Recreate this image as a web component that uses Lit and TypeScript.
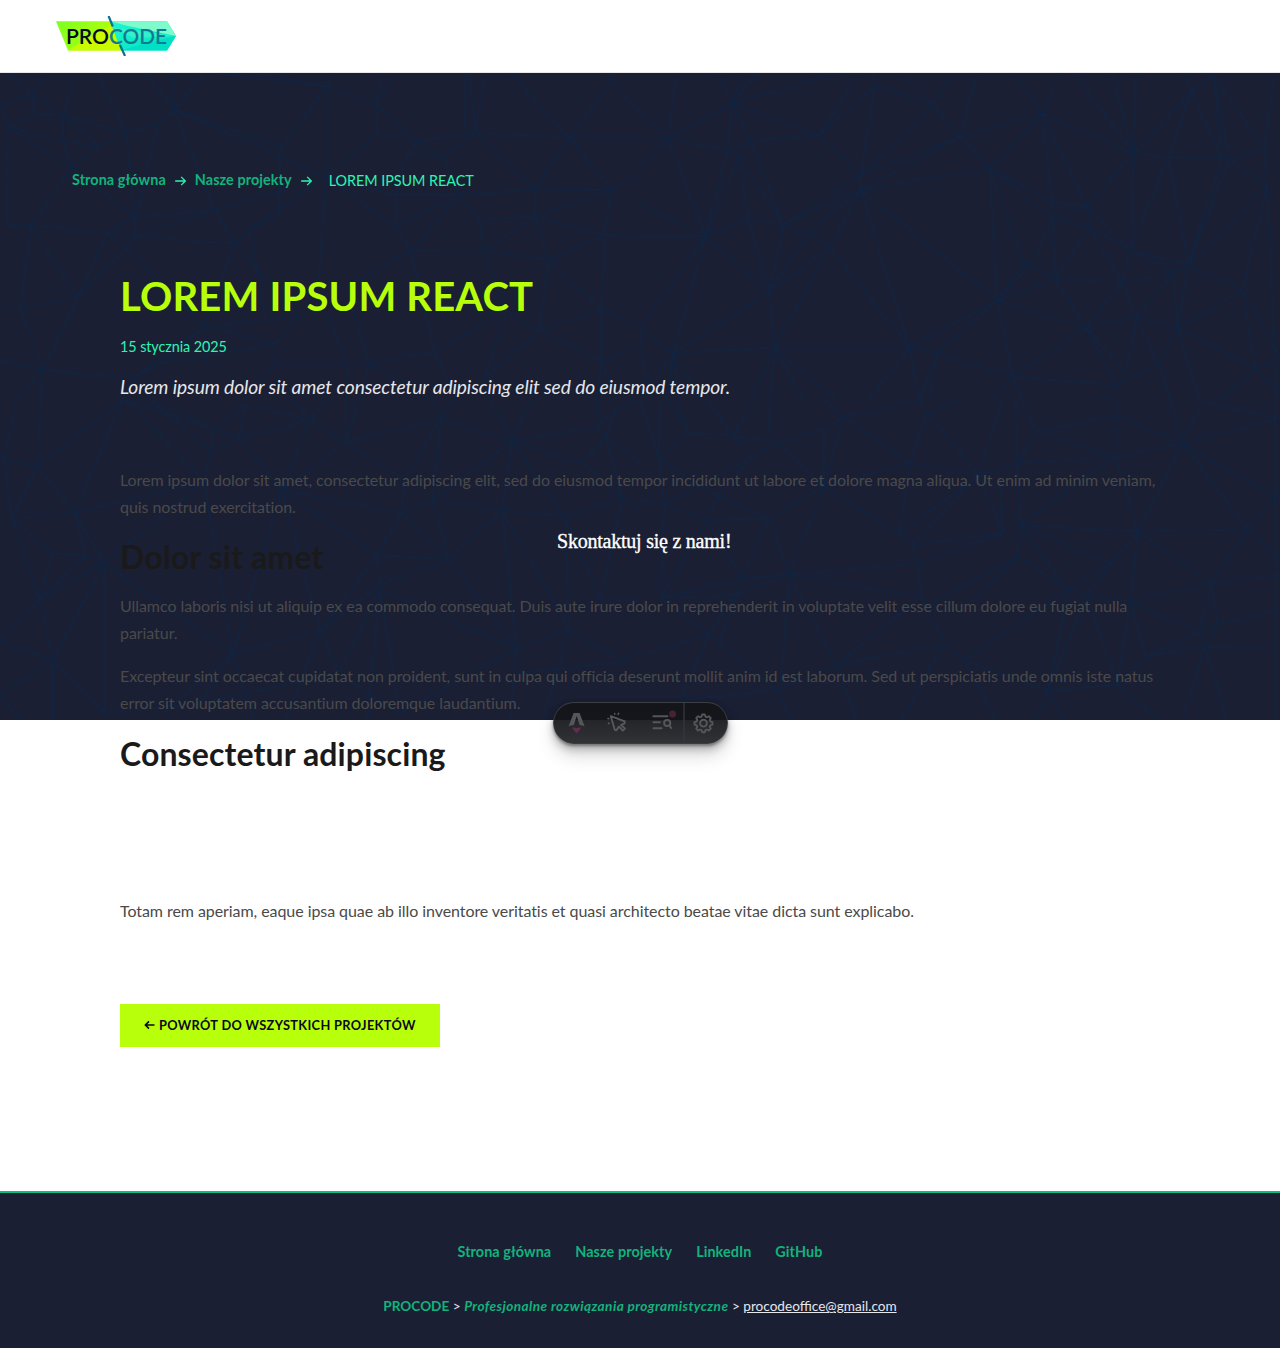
import { LitElement, html, svg, css } from "lit";
import { customElement } from "lit/decorators.js";

// Each tile covers 640x330 units of the mesh, drawn on a finer 1568x990 grid.
// Polylines are separated by ";", points by spaces.
const MESH_TILES: { x: number; y: number; lines: string }[] = [
  {
    x: 0,
    y: 70,
    lines:
      "0,100 80,75 155,135 85,135 80,75 25,10;80,75 105,10;0,100 20,170 85,135;20,170 155,215 240,228 155,135 155,215;20,170 18,465 75,467;155,135 185,10;155,135 310,188;240,228 310,188 385,165 425,118;240,10 310,188;425,10 425,118;355,10 425,118;500,10 425,118;425,118 690,230 685,255;425,118 800,320;425,118 525,420;385,165 335,440;310,188 330,440;240,228 175,295 75,467;175,295 155,215;175,295 330,440;20,170 175,295;75,467 265,488 330,500 330,440 525,420 330,500 575,520 525,420;265,488 330,440;330,500 310,535 265,488 190,680;310,535 500,770;310,535 190,680;575,520 610,478 685,435 685,255;610,478 800,320;525,420 700,360;800,50 690,230;800,50 640,10;800,50 800,320;800,50 920,100;800,50 815,10;530,10 800,50;920,100 935,10;920,100 925,190 1025,215 1165,185;925,190 800,320;920,100 1025,215 1000,250 1085,262 1165,187;1025,215 1085,262;1140,10 1140,180;1150,10 1165,187;1190,10 1165,187;970,10 920,100;1165,187 1395,203 1568,203;1250,10 1395,203 1500,30 1568,130;1500,30 1490,10;1395,203 1310,358 1165,187;1395,203 1500,360;1085,262 1125,375 970,375 800,320;1125,375 1310,358 1500,360 1568,310;1000,250 970,375 968,470 800,320;1125,375 968,470 1005,543 1125,375 1175,448 1310,440 1310,358;1175,448 1185,540 1005,543;1185,540 1310,440 1480,495 1500,360;1480,495 1568,497;1480,495 1345,570 1310,440;1185,540 1345,570;1310,440 1500,360;1345,570 1320,780;1480,495 1475,720 1320,780 1240,720 1185,540;1475,720 1568,765;1345,570 1475,720 1475,875 1568,830;1320,780 1475,875;1320,780 1185,930 1240,720 1065,845 905,880 675,880;1065,845 1120,990;1005,543 860,640;1005,543 1065,845;800,320 780,640;500,770 675,820 730,740 500,770;675,820 675,880;675,820 395,880;500,770 505,880;190,680 50,715 105,900 190,680;75,467 50,715 0,715;75,467 190,680;0,870 105,900 325,925 395,880 500,770 325,925;850,880 800,730;905,880 860,700;575,520 500,770;610,478 650,740;575,520 730,740;105,900 100,990;105,900 40,990;325,925 300,990;325,925 370,990;675,880 600,990;850,880 848,990;905,880 880,990;905,880 1060,990;1185,930 1200,990;1475,875 1460,990;1475,875 1510,990",
  },
  {
    x: 640,
    y: 70,
    lines:
      "0,120 68,205 90,10;0,205 68,205 225,100;68,205 0,290;68,205 215,240 225,100;68,205 160,498;225,100 250,10;225,100 190,10;225,100 290,10;225,100 480,10;225,100 440,195;225,100 272,212 440,195 540,315;272,212 215,240 242,262 272,212;440,195 535,10;440,195 577,45 570,10;577,45 718,105 640,10;718,105 765,10;718,105 785,200 825,10;577,45 540,315;718,105 540,315 785,200 985,130;785,200 857,295;785,200 540,360;540,315 540,360 857,295;540,315 350,465 540,360;540,360 410,490;540,360 465,530;540,360 660,832;540,360 875,692;985,130 920,10;985,130 1030,10;985,130 1210,252;985,130 857,295;985,130 1010,400;985,130 1095,408;1065,10 1210,252;1155,10 1210,252;1215,10 1210,252 1350,65 1405,15;1335,10 1350,65 1425,265;1350,65 1295,260;1210,252 1295,260 1445,268;1405,15 1425,265;1405,15 1445,268;1405,15 1530,235 1445,268 1537,348;1555,10 1530,235 1537,348;1210,252 1095,408;1210,252 1200,540 1295,260 1343,585 1425,265;1445,268 1343,585 1537,348 1475,660;1537,348 1560,990;857,295 1010,395 1095,408 1100,470 1010,445 857,295;1010,445 1095,408 1200,540 1100,470;1010,400 1018,625;1010,445 965,570 940,580;965,570 875,692;857,295 940,580;857,295 875,692;940,580 1018,625 1180,638;940,580 875,692;1018,625 1100,470 1180,638 1200,540;1180,638 1305,608 1200,540 1343,585 1305,608;1343,585 1475,660;1305,608 1318,775 1343,585;1305,608 1217,740 1180,638 1092,773;1018,625 1092,773 1217,740 1318,775 1475,660;1018,625 875,692 1092,773;660,832 875,692 728,848;875,692 913,920 1092,773 1170,945;1092,773 1190,910 1217,740 1270,882;1318,775 1270,882 1170,945 913,920 728,848 660,832 330,832 82,850;1318,775 1508,895 1475,660;1508,895 1568,870;1475,660 1568,860;160,498 0,400;0,498 160,498 215,240;242,262 160,498 265,445 350,465 410,490 465,530;242,262 265,445 318,665;242,262 350,465 272,212;350,465 318,665 160,498;410,490 318,665 465,530 330,832 318,665 82,850 160,498 0,775 82,850;465,530 660,832;0,775 15,940;82,850 20,940;82,850 65,990;82,850 95,990;82,850 150,990;330,832 270,990;330,832 320,990;330,832 400,990;330,832 480,990;660,832 560,990;660,832 685,990 728,848 710,990;913,920 860,990;913,920 935,990;1170,945 1130,990;1270,882 1300,990;1318,775 1370,990;1508,895 1420,990;1508,895 1568,970",
  },
  {
    x: 0,
    y: 400,
    lines:
      "0,165 10,175 90,200 100,0;40,0 10,175;90,200 300,0;90,200 28,355 10,175;90,200 183,338 28,355;183,338 300,0;183,338 500,245;183,338 210,468 130,460 28,355;183,338 255,490 210,468 95,600;255,490 95,600 130,460;28,355 95,600 0,725 130,780 95,600;255,490 130,780;255,490 500,245;255,490 255,940;255,490 570,760;130,780 0,885 50,960;130,780 130,960;130,780 255,940;300,0 525,85 370,0 515,155;310,0 500,245;525,85 600,12 585,115 525,85 515,155 585,115 760,60 600,12;515,155 500,245;585,115 690,270 760,60;720,0 760,60 800,0;760,60 848,125;848,0 848,125 880,0;690,270 848,125 1080,55;848,125 990,240 1080,55;1060,0 1080,55 1110,0;1080,55 1255,125;1080,55 1060,298 1255,125;1200,0 1255,125 1300,0;1255,125 1460,80;1255,125 1425,187 1485,110 1460,80 1510,30 1568,0;1460,80 1465,0;1485,110 1510,30;1485,110 1568,190;1230,330 1255,125 1385,350;1425,187 1525,295 1485,110;1525,295 1385,350 1230,330 1060,298 985,338 990,240;985,338 690,270;1060,298 1100,478 985,338 925,465 1100,478 930,555 925,465 690,270;1230,330 1100,478;1230,330 1265,745;1230,330 1395,690 1385,350 1470,600 1525,295;1525,295 1568,330;930,555 785,690 925,465;930,570 830,820;930,570 900,960;930,570 1265,745;930,570 980,940;785,690 570,760;690,270 785,690 830,820;500,245 570,760 690,270;570,760 490,910;570,760 400,940;570,760 620,960;785,690 700,960;830,820 490,910;830,820 980,940;255,940 490,910;1100,478 1265,745 1395,690 1530,785 1265,820;980,940 1265,745 1250,960;1395,690 1330,960;1530,785 1568,740;1470,600 1568,600",
  },
  {
    x: 640,
    y: 400,
    lines:
      "45,175 120,98 230,108 335,125 270,175 230,108;65,0 120,98 90,0;165,0 230,108 280,0;315,110 320,0;335,125 450,90 498,50;450,90 450,260 335,125;0,0 45,175 50,0;45,175 60,315 270,175 190,290 45,175;450,260 315,355 165,360 190,290 315,355;165,360 60,315 0,300;60,315 50,595 165,360 250,535 315,355 365,523 450,260 635,400;450,260 662,188 498,50 450,0;498,50 450,260;498,50 685,0;662,188 700,40 685,0;780,0 705,40 830,225 662,188 635,400 830,225 665,435 635,400;830,225 890,400 665,435 680,490 365,523;890,0 830,225;920,0 925,190 830,225;935,0 970,95 925,190;970,95 1165,48;970,95 1165,170 925,190;1165,0 1165,170 1330,130 1165,48;1330,130 1380,5 1568,55 1330,130 1300,0;1330,130 1220,395;1330,130 1490,388;1330,130 1568,300;930,375 1165,170 1220,395;925,190 930,375 1220,395 1490,388 1568,270;890,400 880,230;890,400 680,490;930,375 925,470 700,620;800,620 925,470 1050,568;930,375 1155,490 1220,395;1155,490 1050,568 1095,585 1155,490;930,375 1050,568;1095,585 1200,605 1220,395;1200,605 1400,548 1220,395;1490,388 1400,548 1568,525;1490,388 1568,480;1400,548 1370,695 1415,670 1400,548;1415,670 1568,630;1370,695 1383,740 1415,670;1383,740 1240,770 1370,695;1383,740 1535,745;1200,605 1240,770 1170,855 1200,605;1095,585 1170,855 1000,870 1095,585;1050,568 1000,870;1200,605 1370,695;1170,855 1270,960;1330,960 1383,740 1440,960;970,960 1000,870 1040,960;365,523 250,535 50,595 230,585 365,523 690,590 680,490;365,523 480,795;230,585 170,700 50,595;250,535 195,730 170,700 0,770;170,700 100,900;195,730 335,870;365,523 345,860;480,795 745,730 690,590 480,795;745,730 795,780 1050,568;795,780 1000,870;480,795 335,870;480,795 530,960;745,730 640,960;795,780 870,960;335,870 100,900;335,870 370,960;1555,0 1555,960",
  },
];

@customElement("mesh-backdrop")
export class MeshBackdrop extends LitElement {
  static styles = css`
    :host { display: block; background: #1b1f34; }
    .mesh { display: block; width: 100%; height: 100%; }
    .edge { fill: none; stroke: #0b2a4c; stroke-opacity: 0.36; stroke-width: 2.4; stroke-linejoin: bevel; vector-effect: non-scaling-stroke; }
  `;
  render() {
    return html`<svg class="mesh" viewBox="0 73 1280 647" preserveAspectRatio="none" aria-hidden="true">
      ${MESH_TILES.map(
        (t) => svg`<g transform="translate(${t.x} ${t.y}) scale(0.40816 0.33333)">
          ${t.lines.split(";").map((p) => svg`<polyline class="edge" points=${p}></polyline>`)}
        </g>`
      )}
    </svg>`;
  }
}

@customElement("dev-toolbar")
export class DevToolbar extends LitElement {
  static styles = css`
    :host { display: block; }
    .bar {
      box-sizing: border-box; width: 175px; height: 42px; border-radius: 21px;
      border: 1px solid rgba(62, 64, 70, 0.9);
      background: linear-gradient(180deg, #131519 0, #14161b 17px, #242529 17px, #313236 100%);
      box-shadow: 0 2px 3px rgba(0, 0, 0, 0.35), 0 5px 8px rgba(0, 0, 0, 0.24), 0 12px 18px rgba(0, 0, 0, 0.14);
    }
    svg { display: block; }
  `;
  render() {
    return html`<div class="bar">
      <svg width="173" height="40" viewBox="554 703 173 40" fill="none">
        <path d="M684 703V743" stroke="#34363f" stroke-width="1.4" />
        <path fill="#55565a" d="M573.6 713h6l5 13.2q-2.6-1.1-5-1.3l-2.9-8.8-2.9 8.8q-2.6.2-5.2 1.3z" />
        <path fill="#622c50" d="M572.4 727.2q4 1.6 8.2 0 .5 2-1.4 3.6-1.6 1-2.5 2.6-.8-1.6-2.1-2-.3-.9-1-1.3-1.4-1-1.2-2.9z" />
        <g stroke="#58595d" stroke-width="1.8" stroke-linejoin="round" stroke-linecap="round">
          <path d="M610.8 716.2l14 5.2-.2 2-3.6 1.6 4 3.6-2.2 2-3.8-4-2.8 3.8-1.4-.4z" />
          <path d="M614.8 714.2l-.1-.7M618 714.4l.7-1M608.8 718.8l-.9-.2M609.2 723l-.8.8" stroke-width="1.5" />
        </g>
        <g stroke="#55565a" stroke-width="2" stroke-linecap="round">
          <path d="M653.4 716.2h14M653.4 722.2h6.6M653.4 728.2h8.2" />
          <circle cx="667.2" cy="723" r="3.1" /><path d="M669.4 725.6l1.8 2.4" />
        </g>
        <circle cx="672.6" cy="714" r="3.5" fill="#47222f" />
        <g stroke="#55565a" stroke-width="1.9" stroke-linejoin="round">
          <path d="M701.6 716.6l.6-2.1h2.6l.6 2.1 1.6.7 1.9-1.1 1.9 1.9-1.1 1.9.6 1.5 2.2.6v2.6l-2.2.6-.6 1.5 1.1 1.9-1.9 1.9-1.9-1.1-1.6.7-.6 2.1h-2.6l-.6-2.1-1.6-.7-1.9 1.1-1.9-1.9 1.1-1.9-.6-1.5-2.2-.6v-2.6l2.2-.6.6-1.5-1.1-1.9 1.9-1.9 1.9 1.1z" />
          <circle cx="703.5" cy="723.2" r="3.4" />
        </g>
      </svg>
    </div>`;
  }
}

@customElement("app-root")
export class AppRoot extends LitElement {
  static styles = css`
    :host { display: block; font-family: Lato, "Liberation Sans", sans-serif; color: #1a1a1a; }
    .page { position: relative; display: flex; flex-direction: column; min-height: 1348px; background: #fff; box-sizing: border-box; }
    .header { box-sizing: border-box; height: 73px; padding: 16px 56px; border-bottom: 1px solid #e5e7e9; background: #fff; }
    .logo { display: block; }
    .logo-text { font: 600 21.5px Lato, sans-serif; }
    .backdrop { position: absolute; left: 0; right: 0; top: 73px; height: 647px; }
    .main { position: relative; flex: 1; }
    .crumbs { display: flex; align-items: center; padding: 95px 72px 0; height: 24px; font-size: 14.4px; line-height: 24px; color: #2cf5b3; }
    .crumbs a, .links a { color: #12b37c; font-weight: 700; letter-spacing: 0.08px; text-decoration: none; }
    .arrow { display: block; flex: none; margin: 2px 8px 0; }
    .current { margin: 2px 0 0 8px; letter-spacing: -0.04px; }
    .article { padding: 80px 120px 0; }
    .title { margin: 0; font-size: 40px; line-height: 48px; font-weight: 700; letter-spacing: 0.18px; color: #b8ff0b; }
    .date { margin: 15px 0 0; font-size: 14.4px; line-height: 24px; letter-spacing: -0.08px; color: #2cf5b3; }
    .lead { margin: 13px 0 0; font-size: 19.2px; line-height: 30px; letter-spacing: -0.1px; font-style: italic; color: #e5e7eb; }
    .body { padding-top: 64px; }
    .body p { margin: 0; font-size: 16px; line-height: 27.2px; letter-spacing: -0.065px; color: #4a4a4a; }
    .body p + p { margin-top: 16px; }
    .body h2 { margin: 18px 0 15px; font-size: 32px; line-height: 38.4px; font-weight: 700; letter-spacing: 0.12px; color: #1a1a1a; }
    .body .closing { margin-top: 124px; }
    .back { display: inline-flex; align-items: center; box-sizing: border-box; width: 320px; height: 43px; margin-top: 80px; padding: 0 24px 2px; gap: 4px; background: #b8ff0b; color: #0a0a1a; font-size: 12.8px; font-weight: 700; letter-spacing: 0.5px; text-decoration: none; white-space: nowrap; }
    .back svg { flex: none; }
    .back span { letter-spacing: 0.34px; }
    .contact { position: absolute; left: 557px; top: 530px; font: 20px/23px "Liberation Serif", serif; letter-spacing: -0.23px; -webkit-text-stroke: 0.35px #fff; color: #fff; white-space: nowrap; }
    .toolbar { position: absolute; left: 552.5px; top: 702px; }
    .footer { box-sizing: border-box; height: 157px; border-top: 2px solid #12b981; background: #1b1f34; padding-top: 47px; display: flex; flex-direction: column; align-items: center; }
    .links { display: flex; gap: 24px; font-size: 14.4px; line-height: 24px; }
    .legal { margin-top: 31px; font-size: 13.6px; line-height: 23px; color: #e5e7eb; white-space: nowrap; }
    .legal b { color: #12b37c; }
    .legal i { letter-spacing: 0.42px; }
    .legal a { color: #e5e7eb; }
  `;

  private arrow() {
    return html`<svg class="arrow" width="13" height="12" viewBox="0 0 13 12" fill="none" stroke="#2cf5b3" stroke-width="1.3">
      <path d="M1.2 6H11M7.2 1.9L11.3 6 7.2 10.1" />
    </svg>`;
  }

  render() {
    return html`<div class="page">
      <header class="header">
        <svg class="logo" width="120" height="40" viewBox="0 0 120 40">
          <defs>
            <linearGradient id="lime" x1="0" y1="0" x2="1" y2="0.3"><stop offset="0" stop-color="#7dff22" /><stop offset="1" stop-color="#b4ff0a" /></linearGradient>
            <linearGradient id="mint" x1="0" y1="0" x2="1" y2="1"><stop offset="0" stop-color="#22f5cf" /><stop offset="1" stop-color="#00e2c0" /></linearGradient>
          </defs>
          <path fill="url(#lime)" d="M0 5.3H54L65 34.6H12z" />
          <path fill="#c8fa00" d="M12 34.6L56 8l9 26.6z" />
          <path fill="url(#mint)" d="M54 5.3h57l9 14.7-9 14.6H65z" />
          <path fill="#7dfbcc" d="M54 5.3h57l9 14.7L72 10z" />
          <path fill="#4bf3cf" d="M120 20L58 12l20 10z" opacity=".6" />
          <path fill="#00e0c4" d="M120 20l-9 14.6H65L80 30z" />
          <path d="M52.6 0l4.2 10.5M64 29l5 11" stroke="#0f6f8c" stroke-width="2.2" />
          <text class="logo-text" x="10" y="27.6" textLength="43" lengthAdjust="spacingAndGlyphs" fill="#0a0a1a">PRO</text>
          <text class="logo-text" x="53" y="27.6" textLength="58" lengthAdjust="spacingAndGlyphs" fill="#127a92">CODE</text>
        </svg>
      </header>
      <mesh-backdrop class="backdrop"></mesh-backdrop>
      <main class="main">
        <nav class="crumbs">
          <a>Strona główna</a>${this.arrow()}<a>Nasze projekty</a>${this.arrow()}<span class="current">LOREM IPSUM REACT</span>
        </nav>
        <article class="article">
          <h1 class="title">LOREM IPSUM REACT</h1>
          <p class="date">15 stycznia 2025</p>
          <p class="lead">Lorem ipsum dolor sit amet consectetur adipiscing elit sed do eiusmod tempor.</p>
          <div class="body">
            <p>Lorem ipsum dolor sit amet, consectetur adipiscing elit, sed do eiusmod tempor incididunt ut labore et dolore magna aliqua. Ut enim ad minim veniam, quis nostrud exercitation.</p>
            <h2>Dolor sit amet</h2>
            <p>Ullamco laboris nisi ut aliquip ex ea commodo consequat. Duis aute irure dolor in reprehenderit in voluptate velit esse cillum dolore eu fugiat nulla pariatur.</p>
            <p>Excepteur sint occaecat cupidatat non proident, sunt in culpa qui officia deserunt mollit anim id est laborum. Sed ut perspiciatis unde omnis iste natus error sit voluptatem accusantium doloremque laudantium.</p>
            <h2>Consectetur adipiscing</h2>
            <p class="closing">Totam rem aperiam, eaque ipsa quae ab illo inventore veritatis et quasi architecto beatae vitae dicta sunt explicabo.</p>
          </div>
          <a class="back"><svg width="11" height="10" viewBox="0 0 11 10" fill="none" stroke="#0a0a1a" stroke-width="1.6"><path d="M10.5 5H1.6M5 1.4L1.4 5 5 8.6" /></svg><span>POWRÓT DO WSZYSTKICH PROJEKTÓW</span></a>
        </article>
      </main>
      <footer class="footer">
        <nav class="links"><a>Strona główna</a><a>Nasze projekty</a><a>LinkedIn</a><a>GitHub</a></nav>
        <div class="legal"><b>PROCODE</b> &gt; <b><i>Profesjonalne rozwiązania programistyczne</i></b> &gt; <a href="mailto:procodeoffice@gmail.com">procodeoffice@gmail.com</a></div>
      </footer>
      <div class="contact">Skontaktuj się z nami!</div>
      <dev-toolbar class="toolbar"></dev-toolbar>
    </div>`;
  }
}
